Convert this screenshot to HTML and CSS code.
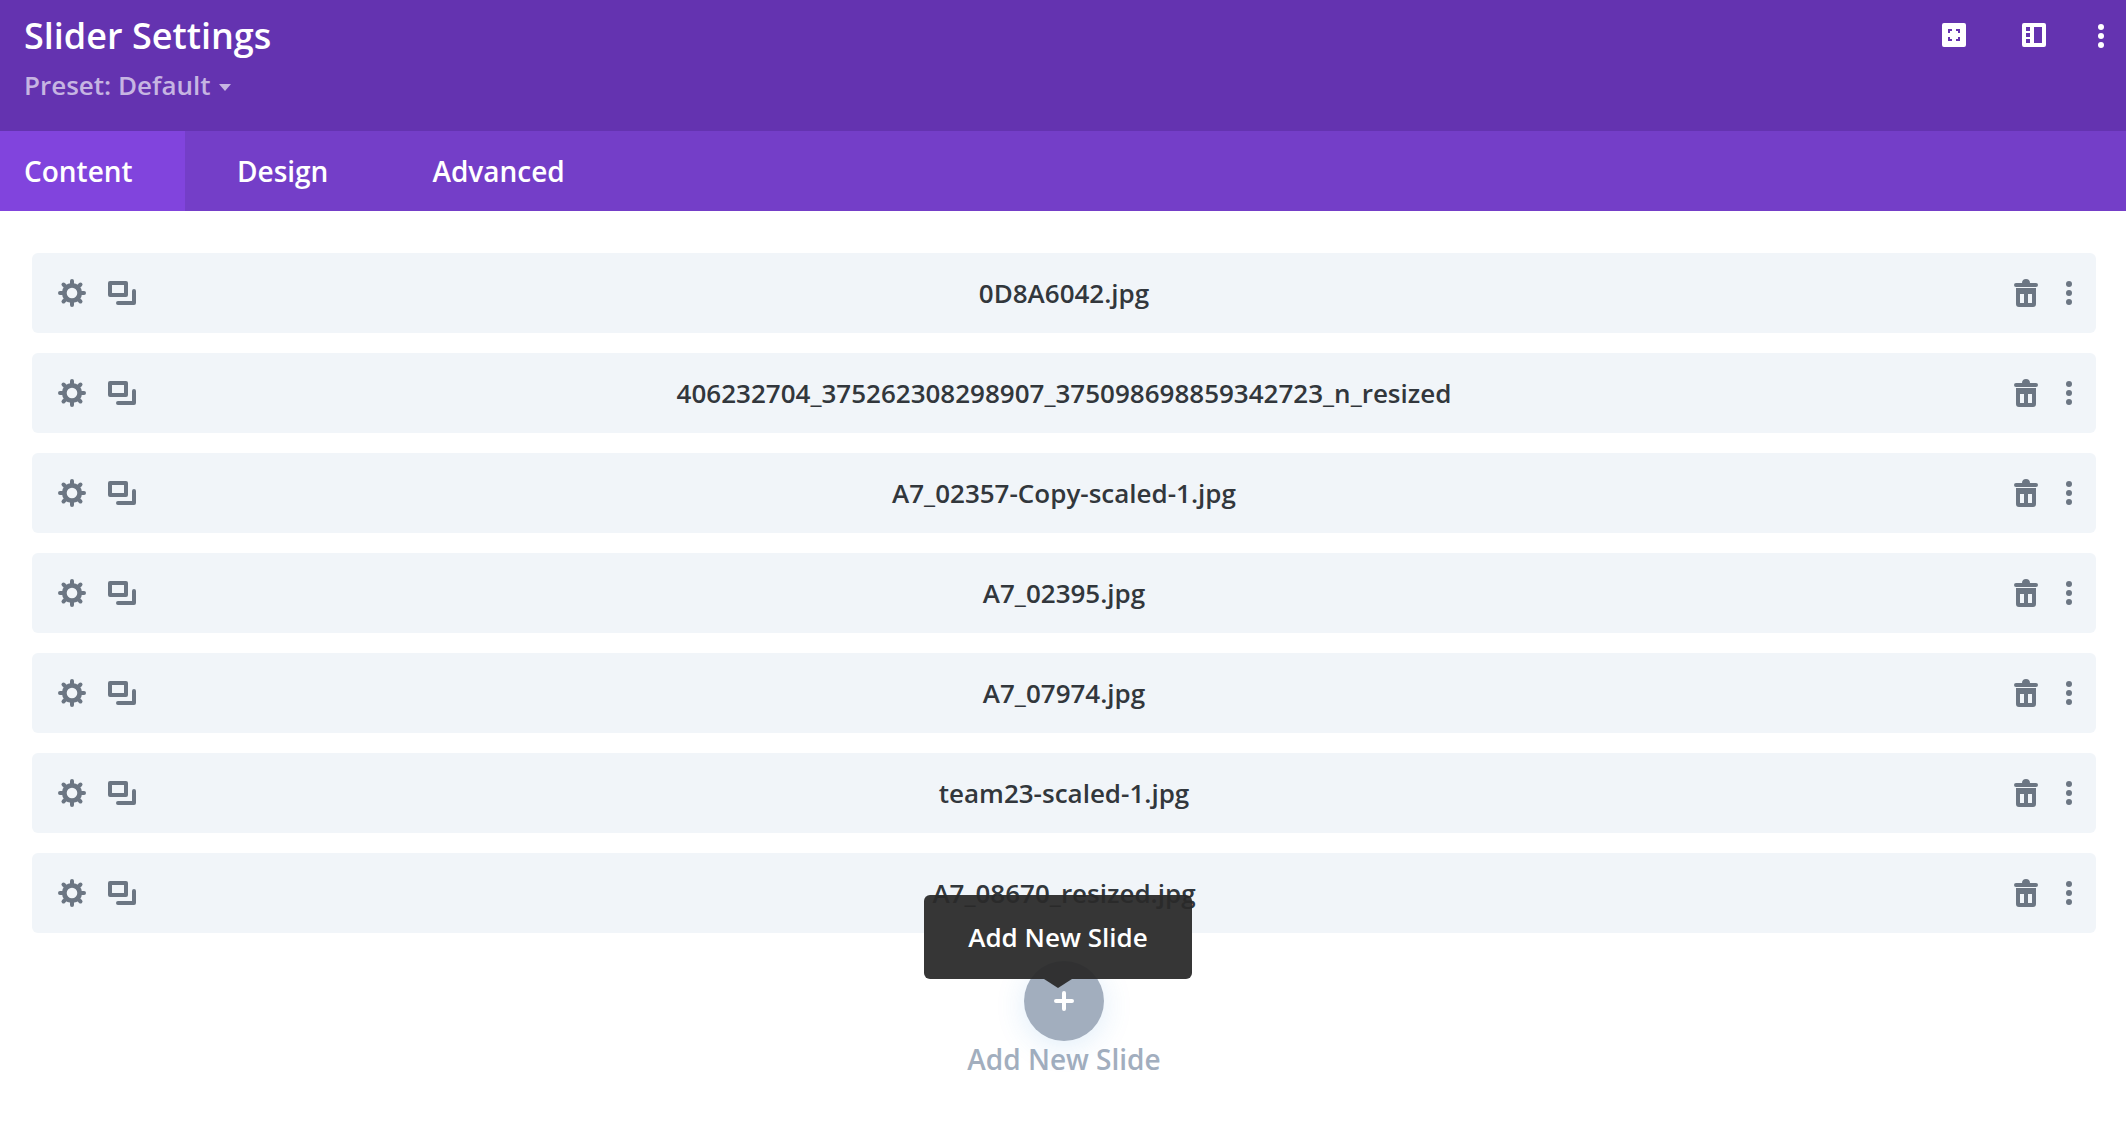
FILE: index.html
```html
<!DOCTYPE html>
<html lang="en">
<head>
<meta charset="utf-8">
<title>Slider Settings</title>
<link rel="stylesheet" href="styles.css">
</head>
<body>
<svg class="defs" width="0" height="0" aria-hidden="true">
  <symbol id="gear" viewBox="0 0 28 28"><circle cx="14" cy="14" r="7.700" fill="none" stroke="currentColor" stroke-width="4.800"/><path fill="none" stroke="currentColor" stroke-width="4" stroke-linecap="round" d="M14 5V2M20.400 7.600l2.100-2.100M23 14h3M20.400 20.400l2.100 2.100M14 23v3M7.600 20.400l-2.100 2.100M5 14H2M7.600 7.600L5.500 5.500"/></symbol>
  <symbol id="copy" viewBox="0 0 28 24"><path fill-rule="evenodd" d="M2 0h16a2 2 0 0 1 2 2v12a2 2 0 0 1-2 2H2a2 2 0 0 1-2-2V2a2 2 0 0 1 2-2zm2 4v8h12V4zM26 8a2 2 0 0 1 2 2v12a2 2 0 0 1-2 2H10a2 2 0 0 1 0-4h14V10a2 2 0 0 1 2-2z"/></symbol>
  <symbol id="trash" viewBox="0 0 24 28"><path fill-rule="evenodd" d="M8 4c0-2.700 1.500-4 4-4s4 1.300 4 4h6a2 2 0 0 1 0 4H2a2 2 0 0 1 0-4zM2 9h20v16a3 3 0 0 1-3 3H5a3 3 0 0 1-3-3zm4 6v9h4v-9zm8 0v9h4v-9z"/></symbol>
  <symbol id="dots" viewBox="0 0 6 24"><circle cx="3" cy="3" r="3"/><circle cx="3" cy="12" r="3"/><circle cx="3" cy="21" r="3"/></symbol>
</svg>

<header class="head">
  <div class="head-text">
    <h1 class="title">Slider Settings</h1>
    <div class="preset">Preset: Default <span class="caret"></span></div>
  </div>
  <div class="head-actions">
    <svg class="head-icon" viewBox="0 0 24 24"><path fill-rule="evenodd" d="M2 0h20a2 2 0 0 1 2 2v20a2 2 0 0 1-2 2H2a2 2 0 0 1-2-2V2a2 2 0 0 1 2-2zm4 6v4h2V8h2V6zm8 0v2h2v2h2V6zM6 14v4h4v-2H8v-2zm10 0v2h-2v2h4v-4z"/></svg>
    <svg class="head-icon" viewBox="0 0 24 24"><path fill-rule="evenodd" d="M2 0h20a2 2 0 0 1 2 2v20a2 2 0 0 1-2 2H2a2 2 0 0 1-2-2V2a2 2 0 0 1 2-2zm2 4v4h4V4zm0 6v4h4v-4zm0 6v4h4v-4zm8-12v16h8V4z"/></svg>
    <svg class="head-dots"><use href="#dots"/></svg>
  </div>
</header>

<nav class="tabs">
  <a class="tab tab-active">Content</a>
  <a class="tab">Design</a>
  <a class="tab">Advanced</a>
</nav>

<main class="panel">
  <ul class="slides">
    <li class="slide"><span class="slide-left"><svg class="ic"><use href="#gear"/></svg><svg class="ic-copy"><use href="#copy"/></svg></span><span class="slide-name">0D8A6042.jpg</span><span class="slide-right"><svg class="ic-trash"><use href="#trash"/></svg><svg class="ic-dots"><use href="#dots"/></svg></span></li>
    <li class="slide"><span class="slide-left"><svg class="ic"><use href="#gear"/></svg><svg class="ic-copy"><use href="#copy"/></svg></span><span class="slide-name">406232704_375262308298907_375098698859342723_n_resized</span><span class="slide-right"><svg class="ic-trash"><use href="#trash"/></svg><svg class="ic-dots"><use href="#dots"/></svg></span></li>
    <li class="slide"><span class="slide-left"><svg class="ic"><use href="#gear"/></svg><svg class="ic-copy"><use href="#copy"/></svg></span><span class="slide-name">A7_02357-Copy-scaled-1.jpg</span><span class="slide-right"><svg class="ic-trash"><use href="#trash"/></svg><svg class="ic-dots"><use href="#dots"/></svg></span></li>
    <li class="slide"><span class="slide-left"><svg class="ic"><use href="#gear"/></svg><svg class="ic-copy"><use href="#copy"/></svg></span><span class="slide-name">A7_02395.jpg</span><span class="slide-right"><svg class="ic-trash"><use href="#trash"/></svg><svg class="ic-dots"><use href="#dots"/></svg></span></li>
    <li class="slide"><span class="slide-left"><svg class="ic"><use href="#gear"/></svg><svg class="ic-copy"><use href="#copy"/></svg></span><span class="slide-name">A7_07974.jpg</span><span class="slide-right"><svg class="ic-trash"><use href="#trash"/></svg><svg class="ic-dots"><use href="#dots"/></svg></span></li>
    <li class="slide"><span class="slide-left"><svg class="ic"><use href="#gear"/></svg><svg class="ic-copy"><use href="#copy"/></svg></span><span class="slide-name">team23-scaled-1.jpg</span><span class="slide-right"><svg class="ic-trash"><use href="#trash"/></svg><svg class="ic-dots"><use href="#dots"/></svg></span></li>
    <li class="slide"><span class="slide-left"><svg class="ic"><use href="#gear"/></svg><svg class="ic-copy"><use href="#copy"/></svg></span><span class="slide-name">A7_08670_resized.jpg</span><span class="slide-right"><svg class="ic-trash"><use href="#trash"/></svg><svg class="ic-dots"><use href="#dots"/></svg></span></li>
  </ul>
  <div class="add">
    <div class="add-btn">
      <svg class="plus" viewBox="0 0 20 20"><path d="M10 2v16M2 10h16"/></svg>
      <div class="tip">Add New Slide</div>
    </div>
    <div class="add-label">Add New Slide</div>
  </div>
</main>
</body>
</html>
```
FILE: styles.css
```css
* { box-sizing: border-box; }
html, body { margin: 0; padding: 0; }
body { width: 2126px; height: 1130px; overflow: hidden; background: #fff; font-family: "Open Sans", sans-serif; font-weight: 600; color: #32373c; }
.defs { position: absolute; }

.head { height: 131px; background: #6433b0; display: flex; justify-content: space-between; padding: 13px 22px 0 24px; }
.title { margin: 0; font-size: 36px; line-height: 46px; font-weight: 600; color: #fff; }
.preset { margin-top: 8px; font-size: 26px; line-height: 36px; color: #c6b5e2; display: flex; align-items: center; gap: 8px; }
.caret { width: 0; height: 0; margin-top: 4px; border: 6px solid transparent; border-top: 7px solid #c6b5e2; border-bottom: 0; }
.head-actions { display: flex; align-items: flex-start; padding-top: 10px; }
.head-icon { width: 24px; height: 24px; fill: #fff; margin-right: 56px; }
.head-icon:nth-child(2) { margin-right: 52px; }
.head-dots { width: 6px; height: 24px; fill: #fff; margin: 1px 0 0; }

.tabs { height: 80px; background: #743ec8; display: flex; }
.tab { display: flex; align-items: center; padding: 0 52px; font-size: 28px; color: #fff; }
.tab:first-child { padding: 0 0 0 24px; width: 185px; }
.tab-active { background: #8144dd; }

.panel { padding: 42px 30px 0 32px; }
.slides { list-style: none; margin: 0; padding: 0; display: flex; flex-direction: column; gap: 20px; }
.slide { height: 80px; background: #f1f5f9; border-radius: 6px; display: grid; grid-template-columns: 1fr auto 1fr; align-items: center; padding: 0 24px; font-size: 26px; color: #32373c; }
.slide-left { display: flex; gap: 22px; align-items: center; padding-left: 2px; }
.slide-right { display: flex; justify-content: flex-end; align-items: center; gap: 28px; }
.ic { width: 28px; height: 28px; color: #6c7683; }
.ic-copy { width: 28px; height: 24px; fill: #6c7683; }
.ic-trash { width: 24px; height: 28px; fill: #6c7683; }
.ic-dots { width: 6px; height: 24px; fill: #6c7683; }

.add { display: flex; flex-direction: column; align-items: center; margin-top: 28px; }
.add-btn { position: relative; width: 80px; height: 80px; border-radius: 50%; background: #a2aebe; box-shadow: 0 5px 30px rgba(43,135,218,.15); display: flex; align-items: center; justify-content: center; }
.plus { width: 20px; height: 20px; stroke: #fff; stroke-width: 4; stroke-linecap: round; fill: none; }
.add-label { margin-top: -1px; font-size: 28px; line-height: 38px; color: #a2aebe; }
.tip { position: absolute; left: -100px; top: -66px; width: 268px; height: 84px; background: rgba(41,41,41,.94); border-radius: 6px; color: #fff; font-size: 26px; display: flex; align-items: center; justify-content: center; white-space: nowrap; }
.tip::after { content: ""; position: absolute; left: 50%; bottom: -9px; margin-left: -14px; border-style: solid; border-width: 9px 14px 0; border-color: rgba(41,41,41,.94) transparent transparent; }
```
